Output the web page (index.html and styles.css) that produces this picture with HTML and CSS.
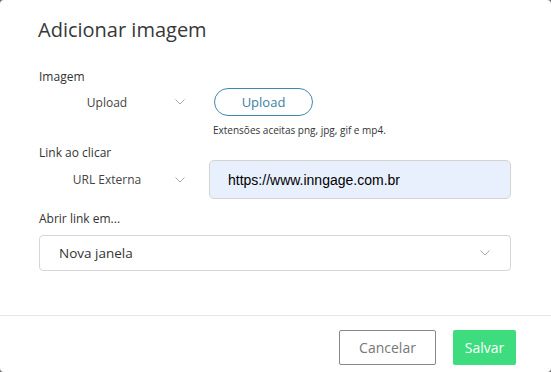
FILE: index.html
```html
<!DOCTYPE html>
<html lang="pt-BR">
<head>
    <meta charset="UTF-8">
    <meta name="viewport" content="width=device-width, initial-scale=1.0">
    <title>Adicionar imagem</title>
    <link rel="stylesheet" href="styles.css">
</head>
<body>
    <div class="modal">
        <div class="modal-header">
            <h2 class="modal-title">Adicionar imagem</h2>
        </div>

        <div class="modal-body">
            <!-- Imagem -->
            <div class="field-label">Imagem</div>
            <div class="field-row">
                <div class="mini-select">
                    <span class="mini-select-text">Upload</span>
                    <svg class="chevron" width="10" height="6" viewBox="0 0 10 6"><path d="M0.5 0.5 L5 5 L9.5 0.5" fill="none" stroke="#a8a8a8" stroke-width="1"/></svg>
                </div>
                <button class="btn-upload" type="button">Upload</button>
            </div>
            <div class="help-text">Extensões aceitas png, jpg, gif e mp4.</div>

            <!-- Link ao clicar -->
            <div class="field-label label-link">Link ao clicar</div>
            <div class="field-row">
                <div class="mini-select">
                    <span class="mini-select-text">URL Externa</span>
                    <svg class="chevron" width="10" height="6" viewBox="0 0 10 6"><path d="M0.5 0.5 L5 5 L9.5 0.5" fill="none" stroke="#a8a8a8" stroke-width="1"/></svg>
                </div>
                <input class="url-input" type="text" value="https://www.inngage.com.br">
            </div>

            <!-- Abrir link em -->
            <div class="field-label label-open">Abrir link em...</div>
            <div class="full-select">
                <span>Nova janela</span>
                <svg class="chevron" width="10" height="6" viewBox="0 0 10 6"><path d="M0.5 0.5 L5 5 L9.5 0.5" fill="none" stroke="#a8a8a8" stroke-width="1"/></svg>
            </div>
        </div>

        <div class="modal-footer">
            <button class="btn-cancel" type="button">Cancelar</button>
            <button class="btn-save" type="button">Salvar</button>
        </div>
    </div>
</body>
</html>
```

FILE: styles.css
```css
body {
    margin: 0;
    background-color: #6b6b6b;
    font-family: "Open Sans", sans-serif;
    color: #333;
}
.modal {
    width: 551px;
    height: 372px;
    background-color: #fff;
    border-radius: 4px;
    box-sizing: border-box;
    display: flex;
    flex-direction: column;
}
.modal-header {
    padding: 16px 38px 0;
}
.modal-title {
    margin: 0;
    font-size: 20px;
    line-height: 27px;
    font-weight: 500;
    color: #383838;
}
.modal-body {
    padding: 26px 40px 44px 39px;
}
.field-label {
    font-size: 12px;
    line-height: 15px;
    color: #333;
    margin-bottom: 4px;
}
.label-link {
    margin-top: 8px;
    margin-bottom: 0;
}
.label-open {
    margin-top: 12px;
    margin-bottom: 9px;
}
.field-row {
    display: flex;
    align-items: center;
}
.mini-select {
    width: 170px;
    flex-shrink: 0;
    display: flex;
    align-items: center;
    box-sizing: border-box;
    padding-right: 24px;
}
.mini-select-text {
    flex: 1;
    text-align: center;
    font-size: 12px;
    color: #444;
}
.chevron {
    display: block;
}
.btn-upload {
    margin-left: 5px;
    width: 99px;
    height: 28px;
    border: 1px solid #3f88ab;
    border-radius: 14px;
    background-color: #fff;
    color: #3b7fa3;
    font-family: "Open Sans", sans-serif;
    font-size: 13px;
    padding: 0;
}
.help-text {
    font-size: 10px;
    line-height: 14px;
    color: #333;
    margin-top: 7px;
    padding-left: 174px;
}
.url-input {
    width: 302px;
    height: 39px;
    box-sizing: border-box;
    border: 1px solid #d3d3d3;
    border-radius: 5px;
    background-color: #e8f0fe;
    padding: 0 0 0 18px;
    font-family: "Liberation Sans", Arial, sans-serif;
    font-size: 14px;
    color: #000;
}
.full-select {
    height: 36px;
    box-sizing: border-box;
    border: 1px solid #d6d6d6;
    border-radius: 4px;
    display: flex;
    align-items: center;
    justify-content: space-between;
    padding: 0 20px 0 19px;
    font-size: 13.5px;
    font-weight: 500;
    color: #333;
}
.modal-footer {
    border-top: 1px solid #e6e6e6;
    padding: 14px 35px 0 0;
    display: flex;
    justify-content: flex-end;
    gap: 17px;
}
.btn-cancel {
    width: 97px;
    height: 35px;
    border: 1px solid #888;
    border-radius: 2px;
    background-color: #fff;
    color: #777;
    font-family: "Open Sans", sans-serif;
    font-size: 14px;
}
.btn-save {
    width: 63px;
    height: 35px;
    border: none;
    border-radius: 2px;
    background-color: #3ddc7e;
    color: #fff;
    font-family: "Open Sans", sans-serif;
    font-size: 14px;
}
```
